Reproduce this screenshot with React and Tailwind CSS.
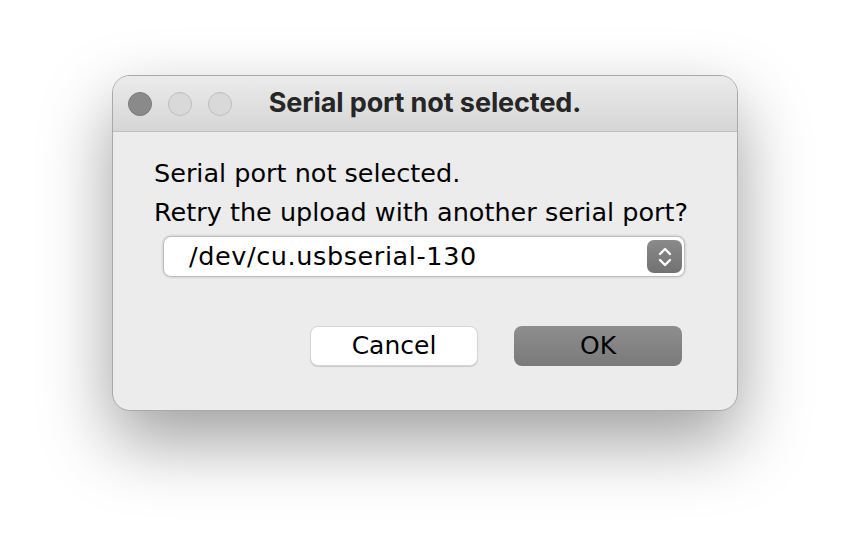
import React from "react";

const bodyFont = { fontFamily: '"DejaVu Sans", "Liberation Sans", sans-serif' };

function TrafficLights() {
  return (
    <div className="flex items-center gap-[16px]">
      <span className="w-[24px] h-[24px] rounded-full bg-[#8a8a8a] border border-[#7a7a7a]" />
      <span className="w-[24px] h-[24px] rounded-full bg-[#d9d9d9] border border-[#bdbdbd]" />
      <span className="w-[24px] h-[24px] rounded-full bg-[#d9d9d9] border border-[#bdbdbd]" />
    </div>
  );
}

function Stepper() {
  return (
    <div className="w-[35px] h-[33px] rounded-[7px] bg-gradient-to-b from-[#8a8a8a] to-[#727272] flex items-center justify-center">
      <svg width="16" height="24" viewBox="0 0 16 24" fill="none">
        <path d="M3 9 L8 4 L13 9" stroke="white" strokeWidth="2.4" strokeLinecap="round" strokeLinejoin="round" />
        <path d="M3 15 L8 20 L13 15" stroke="white" strokeWidth="2.4" strokeLinecap="round" strokeLinejoin="round" />
      </svg>
    </div>
  );
}

export default function App() {
  return (
    <div className="w-[850px] h-[558px] bg-white flex justify-center pt-[75px]">
      <div className="w-[626px] h-[336px] rounded-[18px] border border-[#a9a9a9] bg-[#ececec] overflow-hidden shadow-[0_30px_70px_rgba(0,0,0,0.38)] flex flex-col">
        {/* title bar */}
        <div className="relative h-[56px] shrink-0 bg-gradient-to-b from-[#ebebeb] to-[#d6d6d6] border-b border-[#c0c0c0] flex items-center pl-[15px]">
          <TrafficLights />
          <div
            className="absolute inset-0 flex items-center justify-center text-[27px] font-bold text-[#262626] tracking-[-0.1px]"
            style={{ fontFamily: '"Inter", "Liberation Sans", sans-serif' }}
          >
            Serial port not selected.
          </div>
        </div>

        {/* body */}
        <div className="flex flex-col pl-[41px] pr-[55px] pt-[22px] whitespace-nowrap" style={bodyFont}>
          <p className="text-[25.5px] leading-[39px] text-black">Serial port not selected.</p>
          <p className="text-[25.5px] leading-[39px] text-black">Retry the upload with another serial port?</p>

          <div className="mt-[4px] ml-[9px] w-[522px] h-[41px] rounded-[8px] bg-white border border-[#bdbdbd] shadow-[0_0_0_1.5px_#dcdcdc] flex items-center justify-between pl-[25px] pr-[2px]">
            <span className="text-[25.5px] tracking-[0.6px] text-black">/dev/cu.usbserial-130</span>
            <Stepper />
          </div>

          <div className="flex justify-end gap-[36px] mt-[49px]">
            <button className="w-[168px] h-[40px] rounded-[8px] bg-white border border-[#d6d6d6] shadow-[0_1px_1px_rgba(0,0,0,0.15)] text-[25px] text-black">
              Cancel
            </button>
            <button className="w-[168px] h-[40px] rounded-[8px] bg-gradient-to-b from-[#8e8e8e] to-[#7a7a7a] text-[25px] text-black">
              OK
            </button>
          </div>
        </div>
      </div>
    </div>
  );
}
